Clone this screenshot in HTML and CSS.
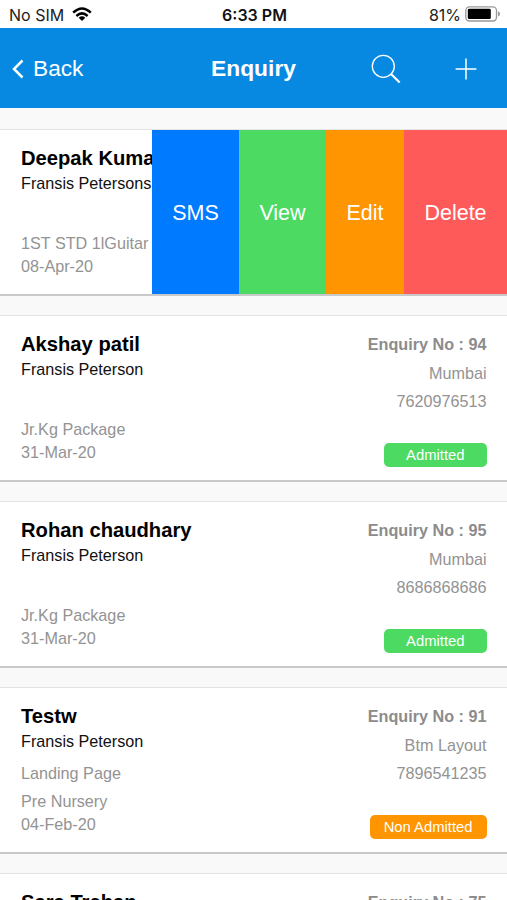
FILE: index.html
```html
<!DOCTYPE html>
<html lang="en">
<head>
<meta charset="utf-8">
<title>Enquiry</title>
<link rel="stylesheet" href="styles.css">
</head>
<body>
<div class="status">
  <div class="carrier"><span>No SIM</span>
    <svg class="wifi" width="20" height="15" viewBox="0 0 20 15"><g fill="none" stroke="#000" stroke-width="2.5"><path d="M1.2 5.7Q10-2.7 18.8 5.7"/><path d="M4.4 9Q10 3.8 15.6 9"/></g><path d="M6.7 10.7Q10 7.8 13.3 10.7L10 14Z"/></svg>
  </div>
  <div class="time">6:33 PM</div>
  <div class="power"><span>81%</span>
    <svg width="36" height="16" viewBox="0 0 36 16"><rect x=".8" y=".8" width="30.7" height="14.2" rx="3.7" fill="#fff" stroke="#999" stroke-width="1.3"/><rect x="2.8" y="2.7" width="23" height="10.4" rx="1.4"/><path d="M33 5.2Q35 6 35 7.9T33 10.6Z" fill="#999"/></svg>
  </div>
</div>
<header class="navbar">
  <a class="back"><svg width="12" height="20" viewBox="0 0 12 20"><path d="M10.5 1.5L2 10l8.500 8.500" fill="none" stroke="#fff" stroke-width="2.500"/></svg><span>Back</span></a>
  <h1>Enquiry</h1>
  <div class="tools">
    <svg class="search" width="31" height="31" viewBox="0 0 31 31" fill="none" stroke="#fff"><circle cx="12.300" cy="12.300" r="11" stroke-width="1.300"/><path d="M20 20l8.700 8.500" stroke-width="2.200"/></svg>
    <svg width="22" height="22" viewBox="0 0 22 22"><path d="M.6 11h20.800M11 .6v20.800" stroke="#fff" stroke-width="1.500"/></svg>
  </div>
</header>
<main>
  <article class="card">
    <div class="info"><h2>Deepak Kumar</h2><p class="owner">Fransis Petersons</p><p class="source"></p><p class="course">1ST STD 1lGuitar</p><p class="date">08-Apr-20</p></div>
    <div class="actions"><button class="sms">SMS</button><button class="view">View</button><button class="edit">Edit</button><button class="delete">Delete</button></div>
  </article>
  <article class="card">
    <div class="info"><h2>Akshay patil</h2><p class="owner">Fransis Peterson</p><p class="source"></p><p class="course">Jr.Kg Package</p><p class="date">31-Mar-20</p></div>
    <div class="details"><p class="number">Enquiry No : 94</p><p>Mumbai</p><p>7620976513</p><span class="badge">Admitted</span></div>
  </article>
  <article class="card">
    <div class="info"><h2>Rohan chaudhary</h2><p class="owner">Fransis Peterson</p><p class="source"></p><p class="course">Jr.Kg Package</p><p class="date">31-Mar-20</p></div>
    <div class="details"><p class="number">Enquiry No : 95</p><p>Mumbai</p><p>8686868686</p><span class="badge">Admitted</span></div>
  </article>
  <article class="card">
    <div class="info"><h2>Testw</h2><p class="owner">Fransis Peterson</p><p class="source">Landing Page</p><p class="course">Pre Nursery</p><p class="date">04-Feb-20</p></div>
    <div class="details"><p class="number">Enquiry No : 91</p><p>Btm Layout</p><p>7896541235</p><span class="badge pending">Non Admitted</span></div>
  </article>
  <article class="card">
    <div class="info"><h2>Sara Trehan</h2></div>
    <div class="details"><p class="number">Enquiry No : 75</p></div>
  </article>
</main>
</body>
</html>
```
FILE: styles.css
```css
* { box-sizing: border-box; margin: 0; padding: 0; }
body {
  width: 507px;
  height: 900px;
  overflow: hidden;
  display: flex;
  flex-direction: column;
  background: #f9f9f9;
  font-family: "Liberation Sans", Arial, sans-serif;
}
.status {
  height: 28px;
  flex: none;
  display: grid;
  grid-template-columns: 1fr auto 1fr;
  align-items: center;
  padding: 2px 7px 0 9px;
  background: #fff;
  font: 16px/26px Inter, sans-serif;
  color: #222;
}
.carrier, .power { display: flex; align-items: center; }
.carrier { gap: 8px; }
.wifi { margin-bottom: 1px; }
.power { justify-content: flex-end; gap: 4px; margin-right: -1px; }
.power svg { margin-bottom: 2px; }
.time { font-weight: 600; color: #111; }
.navbar {
  height: 80px;
  flex: none;
  display: grid;
  grid-template-columns: 1fr auto 1fr;
  align-items: center;
  padding: 2px 30px 0 12px;
  background: #0789e1;
  color: #fff;
}
.back { display: flex; align-items: center; gap: 9px; font-size: 22.700px; }
.back span { padding-bottom: 2px; }
.navbar h1 { font-size: 22.800px; line-height: 28px; padding: 0 0 2px 18px; }
.tools { display: flex; justify-content: flex-end; align-items: center; gap: 53px; }
main { flex: 1; min-height: 0; padding-top: 21px; display: flex; flex-direction: column; gap: 19px; overflow: hidden; }
.card {
  height: 167px;
  flex: none;
  display: flex;
  justify-content: space-between;
  padding: 15px 20.500px 0 21px;
  background: #fff;
  border-top: 1px solid #e4e4e4;
  border-bottom: 2px solid #c9c9c9;
  position: relative;
  overflow: hidden;
}
.info { white-space: nowrap; }
h2 { font-size: 20.200px; line-height: 26px; color: #000; }
.info p, .details p { font-size: 16.200px; line-height: 23px; color: #939393; }
.info .owner { color: #111; padding-top: 1px; }
.info .source { height: 32px; padding-top: 9px; }
.info .course { padding-top: 5px; }
.details { text-align: right; }
.details p { line-height: 28.400px; }
.details .number { font-weight: bold; color: #8c8c8c; margin: -1px 0 0.400px; }
.badge {
  display: inline-block;
  height: 24px;
  margin-top: 27.600px;
  padding: 0 22px;
  border-radius: 5px;
  background: #4cda62;
  color: #fff;
  font-size: 14.800px;
  line-height: 25px;
}
.badge.pending { padding: 0 14px; background: #ff9500; }
/* Swipe actions cover the right side of the row */
.actions { position: absolute; top: 0; right: 0; bottom: 0; display: flex; }
.actions button { border: 0; padding: 3px 20px 0; font: 21.500px "Liberation Sans", Arial, sans-serif; color: #fff; }
.sms { background: #007aff; width: 87px; }
.view { background: #4cda62; width: 87px; }
.edit { background: #ff9500; width: 78px; }
.delete { background: #ff5a5a; width: 103px; }
```
